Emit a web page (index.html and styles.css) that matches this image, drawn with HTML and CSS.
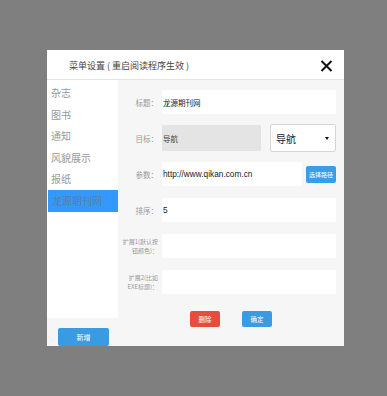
FILE: index.html
```html
<!DOCTYPE html>
<html lang="zh">
<head>
<meta charset="utf-8">
<title>菜单设置</title>
<link rel="stylesheet" href="styles.css">
</head>
<body>
<div class="modal">
  <div class="modal-header">
    <span class="modal-title">菜单设置 ( 重启阅读程序生效 )</span>
    <svg class="close" width="13" height="12" viewBox="0 0 13 12"><path d="M1.5 1 L11.5 11 M11.5 1 L1.5 11" stroke="#111" stroke-width="2" fill="none"/></svg>
  </div>
  <div class="modal-body">
    <aside class="sidebar">
      <ul class="menu">
        <li>杂志</li>
        <li>图书</li>
        <li>通知</li>
        <li>风貌展示</li>
        <li>报纸</li>
        <li class="active">龙源期刊网</li>
      </ul>
      <div class="sidebar-foot"><button class="btn btn-blue btn-add" type="button">新增</button></div>
    </aside>
    <form class="form">
      <div class="row">
        <label class="label">标题：</label>
        <input class="input" type="text" value="龙源期刊网">
      </div>
      <div class="row">
        <label class="label">目标：</label>
        <input class="input input-disabled" type="text" value="导航" disabled>
        <div class="select"><span>导航</span><i class="caret"></i></div>
      </div>
      <div class="row">
        <label class="label">参数：</label>
        <input class="input input-url" type="text" value="http://www.qikan.com.cn">
        <button class="btn btn-path" type="button">选择路径</button>
      </div>
      <div class="row">
        <label class="label">排序：</label>
        <input class="input input-latin" type="text" value="5">
      </div>
      <div class="row">
        <label class="label label-small">扩展1(默认按钮颜色)：</label>
        <input class="input" type="text" value="">
      </div>
      <div class="row">
        <label class="label label-small">扩展2(比如EXE标题)：</label>
        <input class="input" type="text" value="">
      </div>
      <div class="actions">
        <button class="btn btn-red" type="button">删除</button>
        <button class="btn btn-blue btn-ok" type="button">确定</button>
      </div>
    </form>
  </div>
</div>
</body>
</html>
```

FILE: styles.css
```css
* { box-sizing: border-box; }
html, body { margin: 0; padding: 0; }
body {
  background: #7f7f7f;
  width: 387px;
  height: 396px;
  font-family: "Noto Sans CJK SC", "Liberation Sans", sans-serif;
  overflow: hidden;
}
.modal {
  margin: 50px 0 0 47px;
  width: 297px;
  height: 296px;
  background: #fff;
  display: flex;
  flex-direction: column;
}
.modal-header {
  height: 35px;
  border-bottom: 1px solid #e6e6e6;
  display: flex;
  align-items: center;
  justify-content: space-between;
  padding: 2px 11px 0 22px;
}
.modal-title {
  font-size: 9px;
  color: #444;
}
.close { display: block; }
.modal-body {
  flex: 1;
  display: flex;
  background: #f6f6f6;
}
.sidebar {
  width: 71px;
  display: flex;
  flex-direction: column;
}
.menu {
  list-style: none;
  margin: 0;
  padding: 2px 0 0;
  background: #fff;
  height: 238px;
}
.menu li {
  height: 21.6px;
  line-height: 21.6px;
  font-size: 10px;
  color: #999;
  padding-left: 4px;
}
.menu li.active {
  background: #3399ff;
  color: #5a7ea6;
  margin-left: 1px;
  padding-left: 4px;
  height: 22.5px;
  line-height: 22.5px;
}
.sidebar-foot {
  padding: 3px 0 0 11px;
}
.btn {
  border: none;
  padding: 0;
  color: #fff;
  font-family: "Noto Sans CJK SC", sans-serif;
  border-radius: 2px;
  cursor: pointer;
}
.btn-blue { background: #3a9be2; }
.btn-red { background: #e74c3c; }
.btn-add {
  width: 51px;
  height: 18px;
  font-size: 7px;
}
.form {
  flex: 1;
  padding: 10px 8px 0 0;
  display: flex;
  flex-direction: column;
}
.row {
  display: flex;
  align-items: center;
  height: 24px;
  margin-bottom: 12px;
}
.label {
  width: 40px;
  flex: none;
  text-align: right;
  font-size: 7.5px;
  color: #999;
  margin-right: 4px;
  line-height: 9px;
}
.label-small {
  font-size: 6px;
  line-height: 9.5px;
  padding-left: 3px;
}
.input {
  flex: 1;
  min-width: 0;
  height: 24px;
  border: none;
  background: #fff;
  padding: 0 0 0 1px;
  margin: 0;
  font-family: "Noto Sans CJK SC", sans-serif;
  font-size: 7.5px;
  color: #222;
  outline: none;
}
.input-url, .input-latin {
  font-family: "Liberation Sans", "Noto Sans CJK SC", sans-serif;
  font-size: 8.3px;
}
.input-disabled {
  flex: none;
  width: 99px;
  height: 26px;
  background: #e4e4e4;
  color: #444;
}
.select {
  margin-left: 9px;
  flex: 1;
  height: 28px;
  border: 1px solid #d6d6d6;
  border-radius: 2px;
  background: #fff;
  display: flex;
  align-items: center;
  padding: 0 6px 0 5px;
  font-size: 10px;
  color: #222;
}
.caret {
  margin-left: auto;
  width: 0;
  height: 0;
  border-left: 2.5px solid transparent;
  border-right: 2.5px solid transparent;
  border-top: 3px solid #111;
}
.btn-path {
  margin-left: 4px;
  width: 30px;
  height: 17px;
  font-size: 6px;
  background: #3a9ee6;
  flex: none;
}
.actions {
  display: flex;
  justify-content: center;
  gap: 22px;
  margin-top: 5px;
  padding-left: 8px;
}
.btn-red, .btn-ok {
  width: 30px;
  height: 16px;
  font-size: 6.5px;
}
```
